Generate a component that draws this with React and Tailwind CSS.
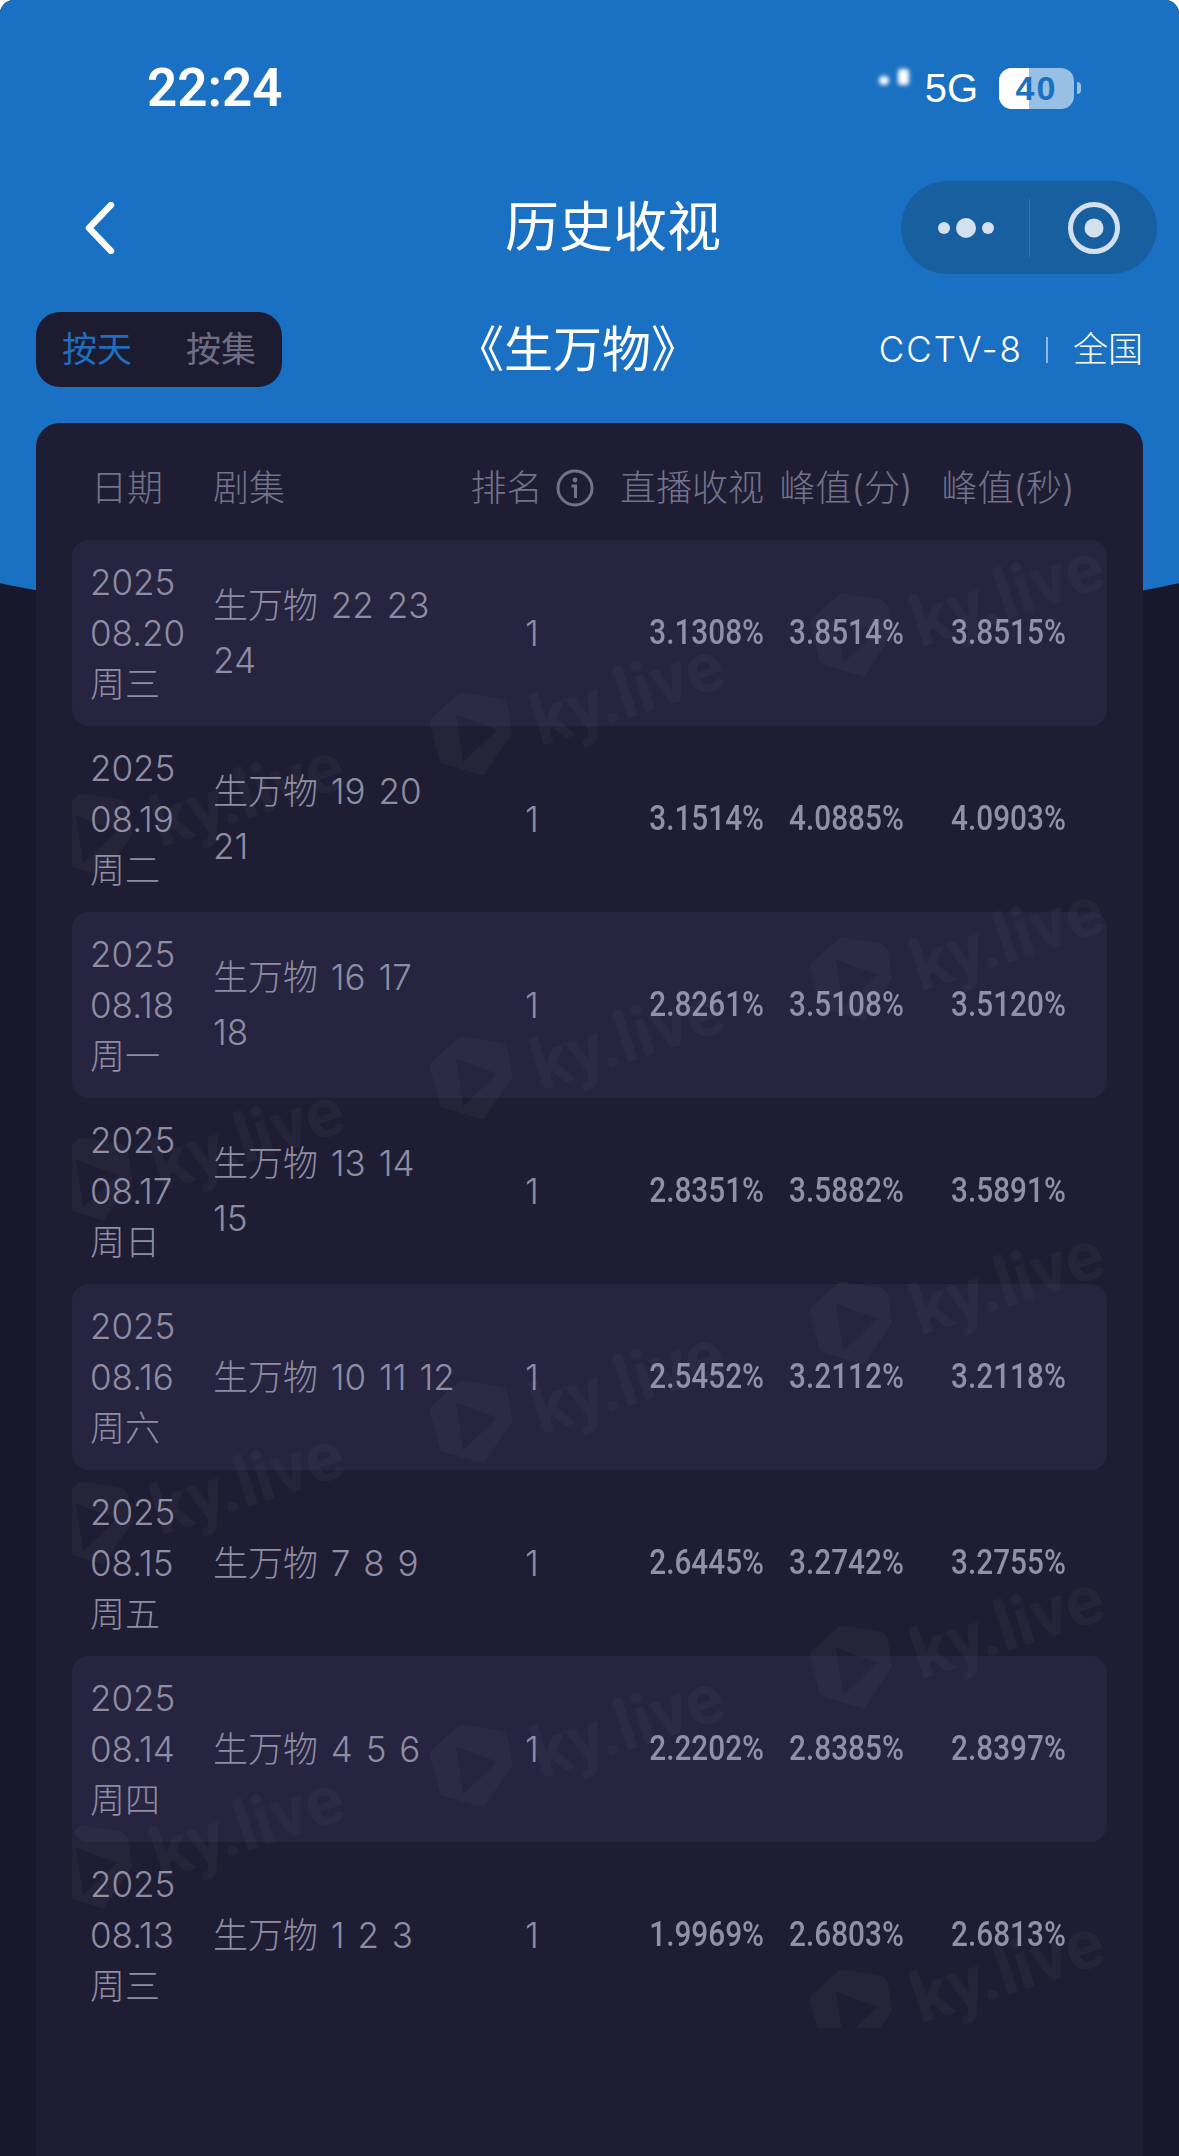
import React from "react";

const rows = [
  { year: "2025", date: "08.20", day: "周三", ep: "生万物 22 23 24", rate: "3.1308%", min: "3.8514%", sec: "3.8515%" },
  { year: "2025", date: "08.19", day: "周二", ep: "生万物 19 20 21", rate: "3.1514%", min: "4.0885%", sec: "4.0903%" },
  { year: "2025", date: "08.18", day: "周一", ep: "生万物 16 17 18", rate: "2.8261%", min: "3.5108%", sec: "3.5120%" },
  { year: "2025", date: "08.17", day: "周日", ep: "生万物 13 14 15", rate: "2.8351%", min: "3.5882%", sec: "3.5891%" },
  { year: "2025", date: "08.16", day: "周六", ep: "生万物 10 11 12", rate: "2.5452%", min: "3.2112%", sec: "3.2118%" },
  { year: "2025", date: "08.15", day: "周五", ep: "生万物 7 8 9", rate: "2.6445%", min: "3.2742%", sec: "3.2755%" },
  { year: "2025", date: "08.14", day: "周四", ep: "生万物 4 5 6", rate: "2.2202%", min: "2.8385%", sec: "2.8397%" },
  { year: "2025", date: "08.13", day: "周三", ep: "生万物 1 2 3", rate: "1.9969%", min: "2.6803%", sec: "2.6813%" },
];

// watermark logo positions, relative to the table area
const marks = [
  { x: 736, y: 51 },
  { x: 356, y: 150 },
  { x: -24, y: 251 },
  { x: 736, y: 395 },
  { x: 356, y: 494 },
  { x: -24, y: 595 },
  { x: 736, y: 739 },
  { x: 356, y: 838 },
  { x: -24, y: 939 },
  { x: 736, y: 1083 },
  { x: 356, y: 1182 },
  { x: -24, y: 1283 },
  { x: 736, y: 1427 },
];

const Watermark = ({ x, y }) => (
  <div className="absolute w-0 h-0" style={{ left: x, top: y }}>
    <svg width="86" height="88" viewBox="80 210 260 265" className="absolute left-0 top-0">
      <path
        d="M190 218 L296 236 Q318 240 322 262 L335 340 L248 468 L118 430 L86 312 Q84 300 94 290 L170 224 Q178 216 190 218 Z M165 284 L290 330 L186 428 Z"
        fill="#ffffff"
        fillOpacity="0.03"
        fillRule="evenodd"
      />
    </svg>
    <span className="absolute left-[199px] top-[3px] -translate-x-1/2 -translate-y-1/2 -rotate-[18deg] text-[70px] leading-none font-bold whitespace-nowrap text-white/[0.03] font-[family-name:Roboto,sans-serif]">
      ky.live
    </span>
  </div>
);

const Row = ({ row, index }) => (
  <div
    className={`grid grid-cols-[141px_250px_138px_163px_164px_160px] items-center h-[186px] rounded-[16px] text-[#8e8da4] ${
      index % 2 === 0 ? "bg-[#26243f]" : ""
    }`}
  >
    <div className="pl-[18px] leading-[51px] font-light">
      <div>{row.year}</div>
      <div>{row.date}</div>
      <div>{row.day}</div>
    </div>
    <div className="pr-[7px] leading-[55px] font-light [word-spacing:3px]">{row.ep}</div>
    <div className="text-center font-light">1</div>
    <div className="text-right font-medium text-[#9090a8] font-[family-name:Roboto,sans-serif]">
      <span className="inline-block origin-right scale-x-[0.85]">{row.rate}</span>
    </div>
    <div className="text-center font-medium text-[#9090a8] font-[family-name:Roboto,sans-serif]">
      <span className="inline-block scale-x-[0.85]">{row.min}</span>
    </div>
    <div className="text-center font-medium text-[#9090a8] font-[family-name:Roboto,sans-serif]">
      <span className="inline-block scale-x-[0.85]">{row.sec}</span>
    </div>
  </div>
);

export default function App() {
  return (
    <div className="bg-white">
      <div className="relative flex flex-col h-[2156px] overflow-hidden rounded-t-[14px] bg-[#18182c] text-[35px] font-[family-name:Inter,'Noto_Sans_CJK_SC',sans-serif]">
        {/* blue curved backdrop, wider than the page so only the shallow part of the curve shows */}
        <div className="absolute left-[-310px] top-0 w-[1800px] h-[637px] bg-[#1a70c2] rounded-b-[50%_220px]" />

        <div className="relative flex flex-col flex-1">
          {/* Status bar */}
          <div className="flex items-center h-[181px] pb-[5px] pl-[147px] text-white">
            <span className="text-[53px] font-semibold leading-none font-[family-name:Roboto,sans-serif]">22:24</span>
            <div className="relative ml-auto mr-[98px] flex items-center">
              <span className="absolute left-[-46px] top-[8px] w-[10px] h-[9px] rounded-full bg-white blur-[2px]" />
              <span className="absolute left-[-27px] top-[1px] w-[11px] h-[16px] rounded-[3px] bg-white blur-[2px]" />
              <span className="text-[40px] leading-none font-[family-name:'Liberation_Sans',sans-serif]">5G</span>
              <div className="relative ml-[21px] w-[75px] h-[41px] rounded-[13px] overflow-hidden bg-white/55 flex items-center justify-center">
                <span className="absolute left-0 top-0 bottom-0 w-[30px] bg-white" />
                <span className="relative text-[34px] font-bold tracking-[2px] leading-none text-[#1a70c2] font-[family-name:'Liberation_Sans',sans-serif]">40</span>
              </div>
              <span className="ml-[3px] w-[4px] h-[12px] rounded-r-full bg-white/55" />
            </div>
          </div>

          {/* Nav */}
          <div className="flex items-center h-[93px] pl-[84px] pr-[22px] text-white">
            <svg width="32" height="52" viewBox="0 0 32 52" fill="none">
              <path d="M27 3 L5 26 L27 49" stroke="#ffffff" strokeWidth="6.5" strokeLinecap="round" strokeLinejoin="round" />
            </svg>
            <span className="ml-[389px] text-[54px] leading-none whitespace-nowrap">历史收视</span>
            <div className="ml-auto relative flex items-center w-[256px] h-[93px] rounded-full bg-[#175f9f]">
              <div className="flex items-center justify-center gap-[6px] w-[128px] pl-[2px]">
                <span className="w-[12px] h-[12px] rounded-full bg-[#d5e0ee]" />
                <span className="w-[20px] h-[20px] rounded-full bg-[#d5e0ee]" />
                <span className="w-[12px] h-[12px] rounded-full bg-[#d5e0ee]" />
              </div>
              <span className="w-px h-[58px] bg-white/15" />
              <div className="flex items-center justify-center w-[127px]">
                <svg width="52" height="52" viewBox="0 0 52 52">
                  <circle cx="26" cy="26" r="23.5" fill="none" stroke="#d5e0ee" strokeWidth="5" />
                  <circle cx="26" cy="26" r="9.5" fill="#d5e0ee" />
                </svg>
              </div>
            </div>
          </div>

          {/* Toolbar */}
          <div className="flex items-center h-[75px] mt-[38px] pl-[36px] pr-[36px] text-white">
            <div className="flex items-center w-[246px] h-[75px] rounded-[24px] bg-[#1c1b30] pl-[26px] gap-[54px]">
              <span className="text-[#1e6fbf]">按天</span>
              <span className="text-[#6e6d84]">按集</span>
            </div>
            <span className="ml-[173px] text-[49px] leading-none whitespace-nowrap">《生万物》</span>
            <div className="ml-auto flex items-center font-light">
              <span className="tracking-[2px]">CCTV-8</span>
              <span className="ml-[23px] mr-[25px] w-[2px] h-[26px] bg-white/50" />
              <span>全国</span>
            </div>
          </div>

          {/* Table card */}
          <div className="flex-1 mx-[36px] mt-[36px] px-[36px] rounded-t-[24px] bg-[#1e1d33]">
            <div className="grid grid-cols-[141px_250px_138px_163px_164px_160px] items-center h-[117px] pt-[13px] text-[36px] text-[#73728a] font-light whitespace-nowrap">
              <div className="pl-[19px]">日期</div>
              <div>剧集</div>
              <div className="flex items-center justify-center gap-[13px]">
                排名
                <svg width="38" height="38" viewBox="0 0 38 38" fill="none" className="shrink-0">
                  <circle cx="19" cy="19" r="17" stroke="#73728a" strokeWidth="3" />
                  <circle cx="19" cy="11" r="2.4" fill="#73728a" />
                  <path d="M15.5 17 H19.5 V29" stroke="#73728a" strokeWidth="3" />
                </svg>
              </div>
              <div className="text-right">直播收视</div>
              <div className="text-center">峰值(分)</div>
              <div className="text-center">峰值(秒)</div>
            </div>

            <div className="relative">
              {rows.map((row, i) => (
                <Row key={row.date} row={row} index={i} />
              ))}
              <div className="absolute inset-0 overflow-hidden pointer-events-none">
                {marks.map((m) => (
                  <Watermark key={`${m.x}-${m.y}`} x={m.x} y={m.y} />
                ))}
              </div>
            </div>
          </div>
        </div>
      </div>
    </div>
  );
}
